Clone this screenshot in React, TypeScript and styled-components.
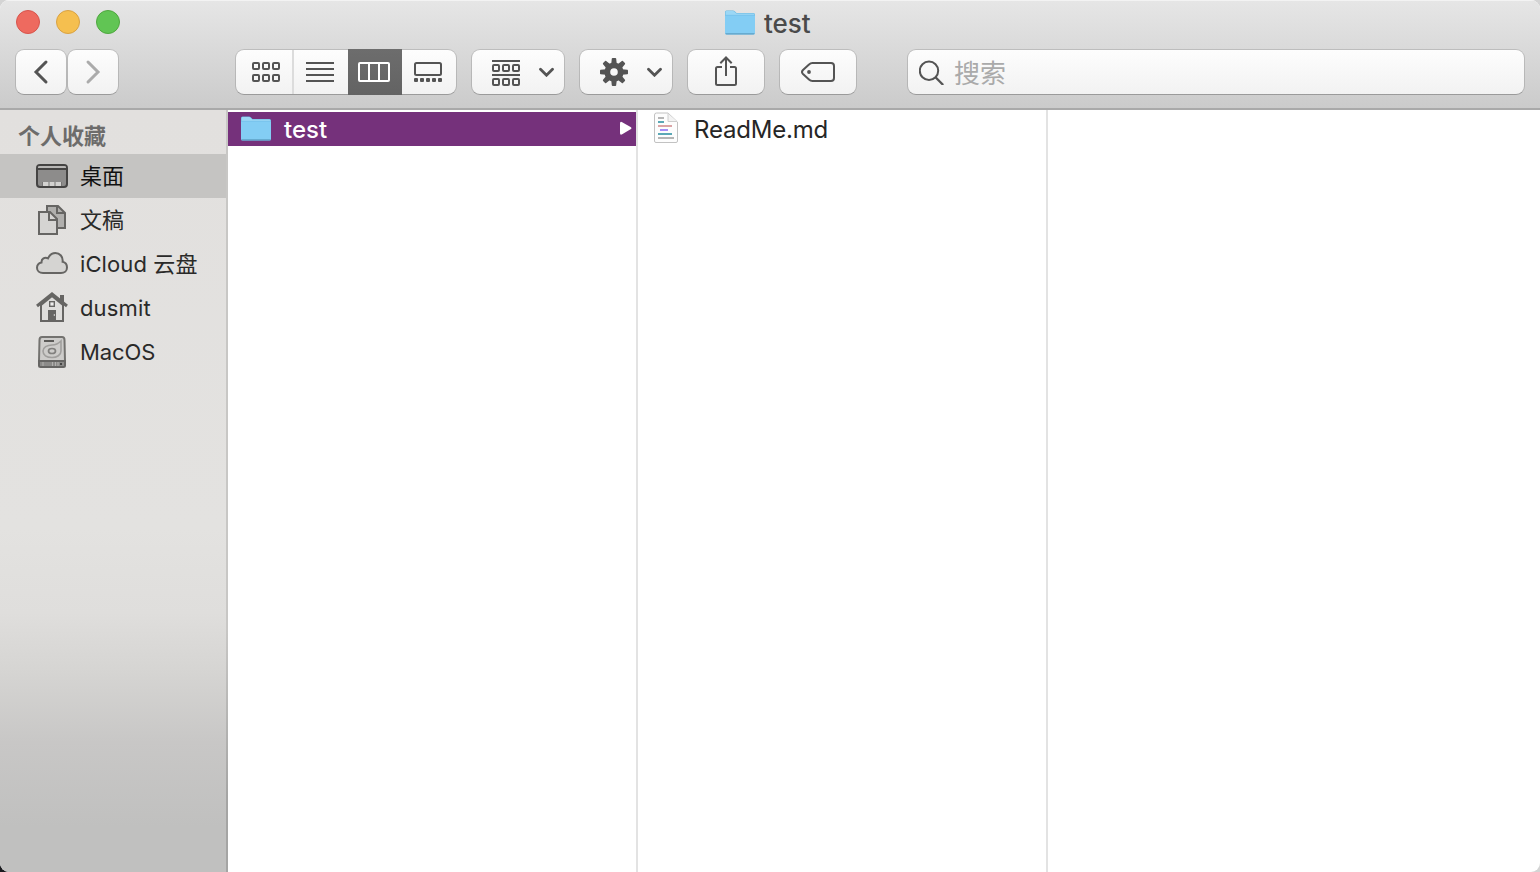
import React from "react";
import styled, { createGlobalStyle, css } from "styled-components";

const GlobalStyle = createGlobalStyle`
  * { box-sizing: border-box; }
  body {
    margin: 0;
    overflow: hidden;
    background: linear-gradient(#1b1b1f, #1b1b1f) left bottom / 20px 20px no-repeat, #d4d4d4;
    font-family: Inter, "Noto Sans CJK SC", sans-serif;
  }
  svg { display: block; flex: none; }
`;

const Window = styled.div`
  width: 1540px;
  height: 872px;
  display: flex;
  flex-direction: column;
  border-radius: 9px;
  overflow: hidden;
  background: #fff;
`;

const Header = styled.header`
  height: 110px;
  flex: none;
  background: linear-gradient(#e6e6e6, #cbcbcb);
  border-bottom: 2px solid #a9a9a9;
  box-shadow: inset 0 1px #f3f3f3;
`;

const TitleBar = styled.div`
  height: 49px;
  display: grid;
  grid-template-columns: 724px auto 1fr;
  align-items: start;
`;

const Lights = styled.div`
  display: flex;
  gap: 16px;
  padding: 10px 0 0 16px;
`;

const Light = styled.span<{ $fill: string; $edge: string }>`
  width: 24px;
  height: 24px;
  border-radius: 50%;
  background: ${(p) => p.$fill};
  border: 1px solid ${(p) => p.$edge};
`;

const Title = styled.h1`
  margin: 0;
  padding-top: 8px;
  display: flex;
  gap: 8px;
  color: #4a4a4a;
  font-size: 26px;
  line-height: 31px;
  font-weight: 450;
  letter-spacing: 0;
`;

const Toolbar = styled.div`
  display: flex;
  padding-left: 15px;
  color: #545454;
`;

const surface = css`
  height: 46px;
  border: 1px solid rgba(0, 0, 0, 0.13);
  border-bottom-color: rgba(0, 0, 0, 0.25);
  border-radius: 9px;
  background: linear-gradient(#fdfdfd, #f2f2f2) padding-box;
`;

const ToolButton = styled.button<{ $width: number; $gap?: number; $muted?: boolean; $menu?: boolean }>`
  ${surface}
  width: ${(p) => p.$width}px;
  margin-right: ${(p) => p.$gap ?? 0}px;
  padding: 0 0 0 ${(p) => (p.$menu ? 11 : 0)}px;
  display: flex;
  align-items: center;
  justify-content: center;
  gap: 19px;
  color: ${(p) => (p.$muted ? "#ababab" : "#545454")};
`;

const Segmented = styled.div`
  ${surface}
  width: 222px;
  margin-right: 14px;
  display: flex;
`;

const Segment = styled.button<{ $active?: boolean; $first?: boolean }>`
  width: ${(p) => (p.$first ? 58 : 54)}px;
  height: ${(p) => (p.$active ? 46 : 44)}px;
  margin-top: ${(p) => (p.$active ? -1 : 0)}px;
  padding: ${(p) => (p.$first ? "0 0 0 4px" : "0 2px 0 0")};
  border: 0;
  border-right: ${(p) => (p.$first ? "2px solid #dcdcdc" : "0")};
  background: ${(p) => (p.$active ? "linear-gradient(#6d6d6d, #636363)" : "transparent")};
  color: ${(p) => (p.$active ? "#fff" : "#545454")};
  display: flex;
  align-items: center;
  justify-content: center;
`;

const SearchField = styled.div`
  ${surface}
  width: 618px;
  padding-left: 11px;
  display: flex;
  align-items: center;
  gap: 9px;
  color: #aaa;
  font-size: 26px;
  line-height: 44px;
`;

const Placeholder = styled.span`
  padding-top: 3px;
`;

const Body = styled.main`
  flex: 1;
  display: flex;
  min-height: 0;
`;

const Sidebar = styled.aside`
  width: 228px;
  flex: none;
  border-right: 2px solid;
  border-image: linear-gradient(#c8c7c5 68%, #a5a5a4 90%) 1;
  background: linear-gradient(#e2e0de 0, #e3e2e0 55%, #dfdedc 66%, #d5d4d2 74%, #c8c7c6 83%, #c0c0bf 94%, #c0c0bf);
`;

const SidebarHeading = styled.h2`
  margin: 0;
  height: 44px;
  padding: 10px 0 0 18px;
  font-size: 22px;
  line-height: 32px;
  font-weight: 600;
  color: #6d6c6b;
`;

const SidebarItem = styled.div<{ $selected?: boolean }>`
  height: 44px;
  padding-left: 36px;
  display: flex;
  align-items: center;
  gap: 12px;
  background: ${(p) => (p.$selected ? "#c5c4c2" : "transparent")};
  color: ${(p) => (p.$selected ? "#111" : "#2a2a29")};
`;

const ItemLabel = styled.span<{ $spacing?: number }>`
  font-size: 22px;
  line-height: 44px;
  letter-spacing: ${(p) => p.$spacing ?? 0}px;
  white-space: nowrap;
`;

const Column = styled.section<{ $last?: boolean }>`
  width: ${(p) => (p.$last ? "auto" : "410px")};
  flex: ${(p) => (p.$last ? 1 : "none")};
  padding-top: 2px;
  border-right: ${(p) => (p.$last ? "0" : "2px solid #e3e3e3")};
`;

const FileRow = styled.div<{ $selected?: boolean }>`
  height: 34px;
  display: flex;
  align-items: flex-start;
  padding: 0 4px 0 ${(p) => (p.$selected ? 12 : 15)}px;
  gap: ${(p) => (p.$selected ? 12 : 15)}px;
  background: ${(p) => (p.$selected ? "#75317b" : "transparent")};
  color: ${(p) => (p.$selected ? "#fff" : "#262626")};
`;

const FileGlyph = styled.span`
  padding-top: 2px;
`;

const FileName = styled.span<{ $spacing: number; $medium?: boolean }>`
  flex: 1;
  font-size: 24px;
  line-height: 36px;
  height: 34px;
  font-weight: ${(p) => (p.$medium ? 500 : 400)};
  letter-spacing: ${(p) => p.$spacing}px;
`;

const Folder = () => (
  <svg width="32" height="28" viewBox="0 0 32 28">
    <path d="M1 24V4Q1 2.500 2.500 2.500H9Q10 2.500 11 3.500L12.500 5H29.500Q31 5 31 6.500V24Z" fill="#68b7df" />
    <path d="M1.500 7.500V4Q1.500 3 2.500 3H9Q10 3 11 4.200L12.500 5.500H29.500Q30.500 5.500 30.500 6.500V7.500Z" fill="#9bd7f5" />
    <path d="M1 7.500H31V25Q31 26.500 29.500 26.500H2.500Q1 26.500 1 25Z" fill="#83cdf4" />
    <path d="M1 7.300H31" stroke="#74c3ec" strokeWidth=".7" />
    <path d="M1.300 25.300Q1.500 26.500 2.700 26.500H29.300Q30.500 26.500 30.700 25.300Z" fill="#5d9fc5" />
  </svg>
);

const Chevron = ({ flip }: { flip?: boolean }) => (
  <svg width="16" height="26" viewBox="0 0 16 26" fill="none" stroke="currentColor" strokeWidth="3" strokeLinecap="round">
    <path d={flip ? "M3 3L13 13L3 23" : "M13 3L3 13L13 23"} />
  </svg>
);

const Down = () => (
  <svg width="16" height="10" viewBox="0 0 16 10" fill="none" stroke="currentColor" strokeWidth="2.800" strokeLinecap="round">
    <path d="M1.500 2.200L7.500 8.200L13.500 2.200" />
  </svg>
);

const Tiles = ({ y }: { y: number }) => (
  <>
    {[1, 11, 21].map((x) => (
      <rect key={x} x={x} y={y} width="6" height="6" rx="1" />
    ))}
  </>
);

const GridIcon = () => (
  <svg width="28" height="20" fill="none" stroke="currentColor" strokeWidth="2">
    <Tiles y={1} />
    <Tiles y={13} />
  </svg>
);

const ListIcon = () => (
  <svg width="28" height="20" stroke="currentColor" strokeWidth="2">
    <path d="M0 1H28M0 7H28M0 13H28M0 19H28" />
  </svg>
);

const ColumnsIcon = () => (
  <svg width="32" height="20" fill="none" stroke="currentColor" strokeWidth="2">
    <rect x="1" y="1" width="30" height="18" rx="1" />
    <path d="M11 1V19M21 1V19" />
  </svg>
);

const GalleryIcon = () => (
  <svg width="28" height="20" fill="none" stroke="currentColor" strokeWidth="2">
    <rect x="1" y="1" width="26" height="12" rx="1.500" />
    {[0, 6, 12, 18, 24].map((x) => (
      <rect key={x} x={x} y="16" width="4" height="4" rx="1" fill="currentColor" stroke="none" />
    ))}
  </svg>
);

const ArrangeIcon = () => (
  <svg width="28" height="28" viewBox="0 0 28 28" fill="none" stroke="currentColor" strokeWidth="2">
    <path d="M0 3H28M0 17H28" />
    <Tiles y={7} />
    <Tiles y={21} />
  </svg>
);

const GearIcon = () => (
  <svg width="28" height="28" viewBox="-14 -14 28 28">
    <circle r="6.700" fill="none" stroke="currentColor" strokeWidth="5.800" />
    {[0, 45, 90, 135, 180, 225, 270, 315].map((a) => (
      <path key={a} d="M-2.800 -8L-2.200 -13.300Q-2.100 -14 -1.400 -14H1.400Q2.100 -14 2.200 -13.300L2.800 -8Z" fill="currentColor" transform={`rotate(${a})`} />
    ))}
  </svg>
);

const ShareIcon = () => (
  <svg width="24" height="32" viewBox="0 0 24 32" fill="none" stroke="currentColor" strokeWidth="2">
    <path d="M8 11H3.500Q2 11 2 12.500V27.500Q2 29 3.500 29H20.500Q22 29 22 27.500V12.500Q22 11 20.500 11H16" />
    <path d="M12 20V1.500M6.300 7.300L12 1.500L17.700 7.300" />
  </svg>
);

const TagIcon = () => (
  <svg width="34" height="20" viewBox="0 0 34 20" fill="none" stroke="currentColor" strokeWidth="2">
    <path d="M11.500 1H30Q33 1 33 4V16Q33 19 30 19H11.500Q9.500 19 8 17.500L2 12Q0 10 2 8L8 2.500Q9.500 1 11.500 1Z" />
    <circle cx="8" cy="10" r="1.900" fill="currentColor" stroke="none" />
  </svg>
);

const SearchIcon = () => (
  <svg width="26" height="26" viewBox="0 0 26 26" fill="none" stroke="#545454" strokeWidth="2">
    <circle cx="10" cy="11.800" r="9.200" />
    <path d="M16.500 18.300L24.200 26" strokeWidth="2.300" />
  </svg>
);

const DesktopIcon = () => (
  <svg width="32" height="32" fill="none" stroke="#454443" strokeWidth="2">
    <rect x="1" y="5" width="30" height="22" rx="3" fill="#8d8c8b" />
    <path d="M2 8V7Q2 6 4 6H28Q30 6 30 7V8Z" fill="#b8b7b5" stroke="none" />
    <path d="M1 9H31" />
    <path d="M6 22H26V26H6Z" fill="#d3d2d0" stroke="none" />
    <path d="M6.500 22V26M13 22V26M19 22V26M25.500 22V26" stroke="#777675" strokeWidth="1" />
  </svg>
);

const DocumentsIcon = () => (
  <svg width="32" height="32" fill="none" stroke="#666563" strokeWidth="2">
    <path d="M11 2H22L29 9V24H11Z" fill="#b0afad" />
    <path d="M21 2V9H29" />
    <path d="M3 8H14L21 15V30H3Z" fill="#d5d4d2" />
    <path d="M13 8V16H21" />
  </svg>
);

const CloudIcon = () => (
  <svg width="32" height="32" fill="#d5d4d2" stroke="#666563" strokeWidth="2">
    <path d="M7 25C3.500 25 1 22.800 1 19.700C1 17 2.800 15 5.500 14.400C5.300 10.800 8.700 8.800 12 10.400C13.500 7 16 5 19.300 5C23.800 5 27.300 8.800 26.600 13.800C29.500 14.500 31 16.700 31 19.400C31 22.800 28.500 25 25 25Z" />
  </svg>
);

const HomeIcon = () => (
  <svg width="32" height="32" fill="none" stroke="#666563" strokeWidth="2">
    <path d="M5 13V29H27V13L16 4Z" fill="#dedddb" />
    <path d="M24 3H28V12L24 8Z" fill="#666563" stroke="none" />
    <path d="M1 14L16 2L31 14" strokeWidth="3" />
    <rect x="13.700" y="9.700" width="4.600" height="4.600" strokeWidth="1.400" fill="#eee" />
    <path d="M12 18H20V29H12Z" fill="#666563" stroke="none" />
    <path d="M18.300 22V24" stroke="#d5d4d2" strokeWidth="1" />
  </svg>
);

const DiskIcon = () => (
  <svg width="32" height="32" fill="none" stroke="#73726f" strokeWidth="2">
    <path d="M6 1H26Q28.500 1 28.500 4L29 25H3L3.500 4Q3.500 1 6 1Z" fill="#cdccca" />
    <path d="M3 25H29V29.500Q29 31 27.500 31H4.500Q3 31 3 29.500Z" fill="#8c8b89" stroke="#666563" />
    <path d="M8 5H18" stroke="#5b5a58" />
    <path d="M25 5V15C25 19 21 21.500 16 21.500C10.500 21.500 7 19 7 15C7 11.500 11 9 16 9C20 9 22 8 25 5Z" stroke="#a09f9d" strokeWidth="1.600" />
    <ellipse cx="16" cy="15" rx="3.500" ry="2.500" stroke="#81807e" strokeWidth="1.700" />
    <path d="M7 26V30M16.500 26V30M19.500 26V30M22 26V30" stroke="#bcbbb9" strokeWidth=".8" />
    <path d="M24 28H26" stroke="#444" />
  </svg>
);

const DocumentFile = () => (
  <svg width="26" height="34" viewBox="0 1 26 34" fill="none">
    <path d="M3.500 2H15L24.500 11V30Q24.500 31.500 23 31.500H3Q1.500 31.500 1.500 30V4Q1.500 2 3.500 2Z" fill="#fdfdfd" stroke="#c2c2c2" />
    <path d="M15 2.500V10.500H24" fill="#f3f3f3" stroke="#cecece" />
    <path d="M5 7H11M5 27H21" stroke="#b5b5b5" strokeWidth="1.800" />
    <path d="M5 11H11M5 23H19" stroke="#5ba8b6" strokeWidth="1.800" />
    <path d="M5 15H19" stroke="#d69a9c" strokeWidth="1.800" />
    <path d="M7 19H15" stroke="#9c82f5" strokeWidth="1.800" />
  </svg>
);

const Disclosure = () => (
  <svg width="13" height="34" viewBox="0 0 13 34">
    <path d="M1 11.500Q1 9 3.200 10.200L12 15.300Q13 16.200 12 17.100L3.200 22.300Q1 23.500 1 21Z" fill="#fff" />
  </svg>
);

const places = [
  { name: "桌面", icon: <DesktopIcon />, selected: true },
  { name: "文稿", icon: <DocumentsIcon /> },
  { name: "iCloud 云盘", icon: <CloudIcon />, spacing: 0.1 },
  { name: "dusmit", icon: <HomeIcon />, spacing: 0.15 },
  { name: "MacOS", icon: <DiskIcon />, spacing: -0.1 },
];

export default function App() {
  return (
    <>
      <GlobalStyle />
      <Window>
        <Header>
          <TitleBar>
            <Lights>
              <Light $fill="#ee6a5f" $edge="#d8544c" />
              <Light $fill="#f5bf4f" $edge="#d9a243" />
              <Light $fill="#61c554" $edge="#4fa73f" />
            </Lights>
            <Title>
              <Folder />
              test
            </Title>
          </TitleBar>
          <Toolbar>
            <ToolButton $width={52}><Chevron /></ToolButton>
            <ToolButton $width={52} $gap={116} $muted><Chevron flip /></ToolButton>
            <Segmented>
              <Segment $first><GridIcon /></Segment>
              <Segment><ListIcon /></Segment>
              <Segment $active><ColumnsIcon /></Segment>
              <Segment><GalleryIcon /></Segment>
            </Segmented>
            <ToolButton $width={94} $gap={14} $menu><ArrangeIcon /><Down /></ToolButton>
            <ToolButton $width={94} $gap={14} $menu><GearIcon /><Down /></ToolButton>
            <ToolButton $width={78} $gap={14}><ShareIcon /></ToolButton>
            <ToolButton $width={78} $gap={50}><TagIcon /></ToolButton>
            <SearchField><SearchIcon /><Placeholder>搜索</Placeholder></SearchField>
          </Toolbar>
        </Header>
        <Body>
          <Sidebar>
            <SidebarHeading>个人收藏</SidebarHeading>
            {places.map((p) => (
              <SidebarItem key={p.name} $selected={p.selected}>
                {p.icon}
                <ItemLabel $spacing={p.spacing}>{p.name}</ItemLabel>
              </SidebarItem>
            ))}
          </Sidebar>
          <Column>
            <FileRow $selected>
              <FileGlyph><Folder /></FileGlyph>
              <FileName $spacing={0} $medium>test</FileName>
              <Disclosure />
            </FileRow>
          </Column>
          <Column>
            <FileRow>
              <DocumentFile />
              <FileName $spacing={-0.2}>ReadMe.md</FileName>
            </FileRow>
          </Column>
          <Column $last />
        </Body>
      </Window>
    </>
  );
}
